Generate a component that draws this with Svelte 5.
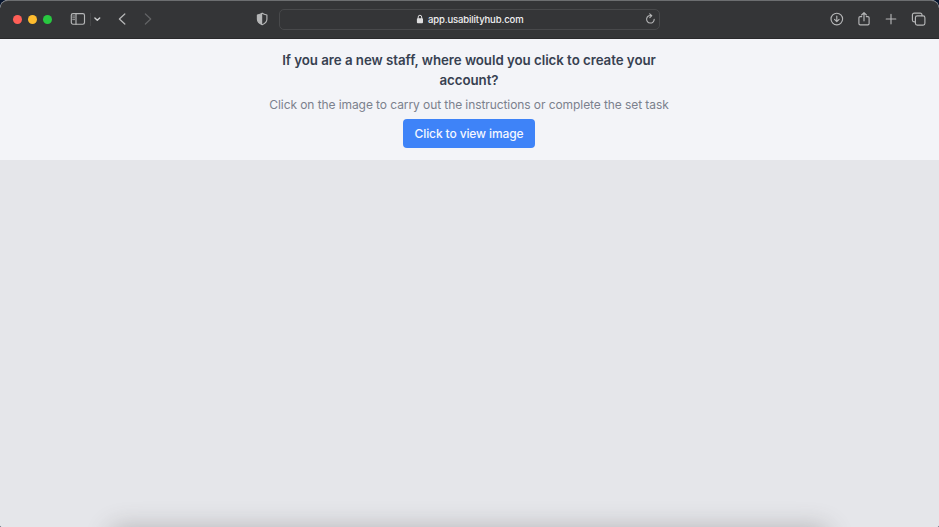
<script>
  const lights = ['#ff5f57', '#febc2e', '#28c840'];
</script>

<div class="window">
  <header>
    <div class="left">
      <div class="lights">
        {#each lights as color}
          <i style:background={color}></i>
        {/each}
      </div>
      <svg class="sidebar" width="16" height="14" viewBox="0 0 16 14">
        <rect x="1.3" y="1.6" width="13.2" height="10.6" rx="1.7" />
        <path d="M6 1.6v10.6" />
        <path class="thin" d="M2.7 4h1.9M2.7 5.8h1.9M2.7 7.6h1.9" />
      </svg>
      <span class="divider"></span>
      <svg class="down" width="8" height="6" viewBox="0 0 8 6"><path d="M1.9 1.9 4.3 4.2 6.7 1.9" /></svg>
      <svg class="back" width="8" height="14" viewBox="0 0 8 14"><path d="M6.8 2 1.4 7l5.4 5" /></svg>
      <svg class="forward" width="8" height="14" viewBox="0 0 8 14"><path d="M1.4 2 6.7 7l-5.3 5" /></svg>
    </div>
    <svg class="shield" width="12" height="14" viewBox="0 0 12 14">
      <path d="M6.2 1.2c1.6 1.1 2.7 1.4 4.7 1.8v4.2c0 2.4-1.7 4.2-4.7 5.5C3.2 11.4 1.4 9.6 1.4 7.2V3c2-.4 3.2-.7 4.8-1.8Z" />
      <path class="fill" d="M6.2 1.2v11.5C3.2 11.4 1.4 9.6 1.4 7.2V3c2-.4 3.2-.7 4.8-1.8Z" />
    </svg>
    <div class="address">
      <svg class="lock" width="8" height="10" viewBox="0 0 8 10">
        <rect x=".9" y="4.2" width="6.1" height="5" rx=".9" />
        <path d="M2.2 4.7V3a1.75 1.75 0 0 1 3.5 0v1.7" />
      </svg>
      <span>app.usabilityhub.com</span>
      <svg class="reload" width="11" height="12" viewBox="0 0 11 12">
        <path d="M6.4 2.6A3.8 3.8 0 1 0 9.2 6.2" />
        <path d="M4.7.8 6.8 2.7 4.8 4.7" />
      </svg>
    </div>
    <div class="right">
      <svg width="14" height="14" viewBox="0 0 14 14">
        <circle cx="6.8" cy="7" r="5.8" />
        <path d="M6.8 4v5.6M4.5 7.4 6.8 9.7l2.3-2.3" />
      </svg>
      <svg width="14" height="16" viewBox="0 0 14 16">
        <path d="M4.7 5.6H3.2c-.8 0-1.3.5-1.3 1.2v5.8c0 .8.5 1.3 1.3 1.3h7.6c.8 0 1.3-.5 1.3-1.3V6.8c0-.7-.5-1.2-1.3-1.2H9.3M7 9.8V1.6M4.6 4 7 1.6 9.4 4" />
      </svg>
      <svg width="12" height="12" viewBox="0 0 12 12"><path d="M6 1.2v9.6M1.2 6h9.6" /></svg>
      <svg width="16" height="14" viewBox="0 0 16 14">
        <path d="M4.4 9.8H3.2A1.8 1.8 0 0 1 1.4 8V2.9A1.8 1.8 0 0 1 3.2 1.1h6A1.8 1.8 0 0 1 11 2.9v.8" />
        <rect x="4.4" y="3.9" width="9.5" height="9.2" rx="1.8" />
      </svg>
    </div>
  </header>
  <section>
    <h1>If you are a new staff, where would you click to create your<br />account?</h1>
    <p>Click on the image to carry out the instructions or complete the set task</p>
    <button>Click to view image</button>
  </section>
  <main></main>
</div>

<style>
  :global(body) { margin: 0; background: #07152d; }
  .window {
    width: 939px;
    height: 527px;
    display: flex;
    flex-direction: column;
    overflow: hidden;
    border-radius: 8px 8px 2px 2px;
    font-family: Inter, "Liberation Sans", sans-serif;
    background: #e5e6ea;
  }
  header {
    box-sizing: border-box;
    height: 39px;
    flex: none;
    display: flex;
    align-items: center;
    padding-bottom: 1px;
    background: #343537;
    border-top: 1px solid #6c6e70;
    border-bottom: 1px solid #29292b;
    border-radius: 8px 8px 0 0;
  }
  svg {
    display: block;
    flex: none;
    fill: none;
    stroke: #b5b6b7;
    stroke-width: 1.15;
    stroke-linecap: round;
    stroke-linejoin: round;
  }
  .left { display: flex; align-items: center; width: 256px; }
  .lights { display: flex; gap: 5.7px; margin-left: 13.4px; }
  .lights i { width: 9px; height: 9px; border-radius: 50%; }
  .sidebar { margin-left: 18px; }
  .thin { stroke-width: .8; }
  .divider { width: 1px; height: 13px; margin-left: 4px; background: #444547; }
  .down { margin-left: 2px; stroke: #d0d1d2; stroke-width: 1.4; }
  .back { margin-left: 17px; stroke-width: 1.3; }
  .forward { margin-left: 18px; stroke: #626365; stroke-width: 1.3; }
  .shield .fill { fill: #b5b6b7; stroke: none; }
  .address {
    box-sizing: border-box;
    width: 381px;
    height: 21px;
    margin-left: 11px;
    padding: 0 3px 0 136px;
    display: flex;
    align-items: center;
    border: 1px solid #48494b;
    border-radius: 5px;
    color: #f0f0f1;
    font-size: 9.5px;
    font-weight: 500;
    letter-spacing: -.13px;
    line-height: 19px;
    white-space: nowrap;
  }
  .address span { margin-left: 4px; padding-top: 1px; }
  .lock { stroke: #dededf; stroke-width: 1; }
  .lock rect { fill: #dededf; stroke: none; }
  .reload { margin-left: auto; stroke-width: 1.1; }
  .right { display: flex; align-items: center; margin-left: 170px; }
  .right svg:nth-child(2) { margin-left: 13px; }
  .right svg:nth-child(3) { margin-left: 14px; }
  .right svg:nth-child(4) { margin-left: 14px; }
  section {
    width: 938px;
    height: 121px;
    flex: none;
    display: flex;
    flex-direction: column;
    align-items: center;
    background: #f3f4f8;
    box-shadow: 1px 0 #f3f4f8;
    text-align: center;
    white-space: nowrap;
  }
  h1 {
    margin: 11px 0 0;
    color: #374151;
    font-size: 13.3px;
    font-weight: 600;
    letter-spacing: -.04px;
    line-height: 20px;
  }
  p {
    margin: 5px 0 0;
    color: #7b818d;
    font-size: 12px;
    letter-spacing: -.08px;
    line-height: 20px;
  }
  button {
    width: 132px;
    height: 29px;
    margin: 4px 0 0;
    padding: 0;
    border: 0;
    border-radius: 4px;
    background: #3e83f8;
    color: #f4f7ff;
    font: 500 12px/29px Inter, "Liberation Sans", sans-serif;
    letter-spacing: -.11px;
  }
  main { flex: 1; position: relative; overflow: hidden; background: #e5e6ea; }
  main::after {
    content: "";
    position: absolute;
    left: 112px;
    right: 112px;
    bottom: -23px;
    height: 20px;
    border-radius: 10px;
    box-shadow: 0 0 24px 3px rgb(80 75 75 / 32%);
  }
</style>
